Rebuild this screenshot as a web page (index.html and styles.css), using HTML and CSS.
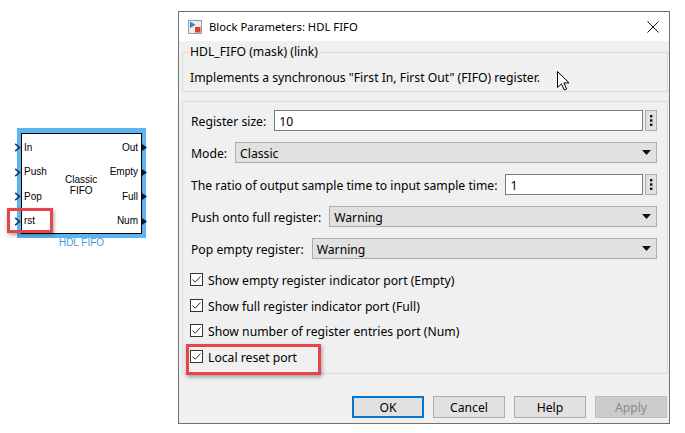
FILE: index.html
```html
<!DOCTYPE html>
<html>
<head>
<meta charset="utf-8">
<link rel="stylesheet" href="styles.css">
</head>
<body>
<div class="page">
  <div class="canvas">
    <div class="block">
      <div class="block-inner">
        <div class="ports ports-in">
          <div class="port"><svg class="chev" width="7" height="9" viewBox="0 0 7 9"><path d="M1.2 0.8 L5.5 4.5 L1.2 8.2" fill="none" stroke="#1d3557" stroke-width="1.6"/></svg>In</div>
          <div class="port"><svg class="chev" width="7" height="9" viewBox="0 0 7 9"><path d="M1.2 0.8 L5.5 4.5 L1.2 8.2" fill="none" stroke="#1d3557" stroke-width="1.6"/></svg>Push</div>
          <div class="port"><svg class="chev" width="7" height="9" viewBox="0 0 7 9"><path d="M1.2 0.8 L5.5 4.5 L1.2 8.2" fill="none" stroke="#1d3557" stroke-width="1.6"/></svg>Pop</div>
          <div class="port"><svg class="chev" width="7" height="9" viewBox="0 0 7 9"><path d="M1.2 0.8 L5.5 4.5 L1.2 8.2" fill="none" stroke="#1d3557" stroke-width="1.6"/></svg>rst</div>
        </div>
        <div class="block-title">Classic<br>FIFO</div>
        <div class="ports ports-out">
          <div class="port">Out<svg class="tri" width="5" height="7" viewBox="0 0 5 7"><path d="M0 0 L5 3.5 L0 7 Z" fill="#0d1b2a"/></svg></div>
          <div class="port">Empty<svg class="tri" width="5" height="7" viewBox="0 0 5 7"><path d="M0 0 L5 3.5 L0 7 Z" fill="#0d1b2a"/></svg></div>
          <div class="port">Full<svg class="tri" width="5" height="7" viewBox="0 0 5 7"><path d="M0 0 L5 3.5 L0 7 Z" fill="#0d1b2a"/></svg></div>
          <div class="port">Num<svg class="tri" width="5" height="7" viewBox="0 0 5 7"><path d="M0 0 L5 3.5 L0 7 Z" fill="#0d1b2a"/></svg></div>
        </div>
      </div>
    </div>
    <div class="block-name">HDL FIFO</div>
    <div class="hl hl-rst"></div>
  </div>

  <div class="dialog">
    <div class="titlebar">
      <svg class="app-icon" width="14" height="14" viewBox="0 0 14 14">
        <rect x="0.5" y="0.5" width="13" height="13" fill="#ececec" stroke="#9a9a9a"/>
        <path d="M2 1.5 L2 8 L7.5 4.7 Z" fill="#2f7fd1"/>
        <rect x="7" y="7" width="5.5" height="5.5" fill="#d8431c"/>
      </svg>
      <span class="title">Block Parameters: HDL FIFO</span>
      <svg class="close" width="12" height="12" viewBox="0 0 12 12"><path d="M0.5 0.5 L11.5 11.5 M11.5 0.5 L0.5 11.5" stroke="#111" stroke-width="1"/></svg>
    </div>
    <div class="content">
      <fieldset class="group group-desc">
        <legend>HDL_FIFO (mask) (link)</legend>
        <p class="desc">Implements a synchronous "First In, First Out" (FIFO) register.</p>
      </fieldset>
      <div class="group group-params">
        <div class="row">
          <span class="label">Register size:</span>
          <span class="edit">10</span>
          <span class="more"><svg width="3" height="11" viewBox="0 0 3 11"><rect x="0" y="0" width="2.4" height="2.4" fill="#111"/><rect x="0" y="4.3" width="2.4" height="2.4" fill="#111"/><rect x="0" y="8.6" width="2.4" height="2.4" fill="#111"/></svg></span>
        </div>
        <div class="row">
          <span class="label">Mode:</span>
          <span class="combo"><span class="val">Classic</span><svg class="arrow" width="9" height="5" viewBox="0 0 9 5"><path d="M0 0 L9 0 L4.5 5 Z" fill="#111"/></svg></span>
        </div>
        <div class="row">
          <span class="label">The ratio of output sample time to input sample time:</span>
          <span class="edit">1</span>
          <span class="more"><svg width="3" height="11" viewBox="0 0 3 11"><rect x="0" y="0" width="2.4" height="2.4" fill="#111"/><rect x="0" y="4.3" width="2.4" height="2.4" fill="#111"/><rect x="0" y="8.6" width="2.4" height="2.4" fill="#111"/></svg></span>
        </div>
        <div class="row">
          <span class="label">Push onto full register:</span>
          <span class="combo"><span class="val">Warning</span><svg class="arrow" width="9" height="5" viewBox="0 0 9 5"><path d="M0 0 L9 0 L4.5 5 Z" fill="#111"/></svg></span>
        </div>
        <div class="row">
          <span class="label">Pop empty register:</span>
          <span class="combo"><span class="val">Warning</span><svg class="arrow" width="9" height="5" viewBox="0 0 9 5"><path d="M0 0 L9 0 L4.5 5 Z" fill="#111"/></svg></span>
        </div>
        <div class="check-row">
          <span class="box"><svg width="11" height="11" viewBox="0 0 11 11"><path d="M1.5 5.5 L4.2 8.2 L9.5 2.5" fill="none" stroke="#333" stroke-width="1"/></svg></span>
          <span class="ctext">Show empty register indicator port (Empty)</span>
        </div>
        <div class="check-row">
          <span class="box"><svg width="11" height="11" viewBox="0 0 11 11"><path d="M1.5 5.5 L4.2 8.2 L9.5 2.5" fill="none" stroke="#333" stroke-width="1"/></svg></span>
          <span class="ctext">Show full register indicator port (Full)</span>
        </div>
        <div class="check-row">
          <span class="box"><svg width="11" height="11" viewBox="0 0 11 11"><path d="M1.5 5.5 L4.2 8.2 L9.5 2.5" fill="none" stroke="#333" stroke-width="1"/></svg></span>
          <span class="ctext">Show number of register entries port (Num)</span>
        </div>
        <div class="check-row check-hl">
          <span class="box"><svg width="11" height="11" viewBox="0 0 11 11"><path d="M1.5 5.5 L4.2 8.2 L9.5 2.5" fill="none" stroke="#333" stroke-width="1"/></svg></span>
          <span class="ctext">Local reset port</span>
          <div class="hl hl-local"></div>
        </div>
      </div>
      <div class="buttons">
        <span class="btn btn-default">OK</span>
        <span class="btn">Cancel</span>
        <span class="btn">Help</span>
        <span class="btn btn-disabled">Apply</span>
      </div>
    </div>
    <svg class="cursor" width="13" height="20" viewBox="0 0 13 20"><path d="M0.5 0.5 L0.5 16.5 L4.5 12.8 L7.3 19 L9.6 18 L6.9 11.9 L12 11.9 Z" fill="#fff" stroke="#000" stroke-width="1" stroke-linejoin="miter"/></svg>
  </div>
</div>
</body>
</html>
```

FILE: styles.css
```css
* { box-sizing: border-box; }
html, body { margin: 0; padding: 0; }
body {
  width: 685px;
  height: 433px;
  background: #ffffff;
  overflow: hidden;
  font-family: "Noto Sans", "Open Sans", sans-serif;
  font-size: 12.2px;
  color: #000;
}
.page {
  display: flex;
  align-items: flex-start;
  padding-top: 11px;
}

/* ---------- Simulink block ---------- */
.canvas {
  position: relative;
  width: 178px;
  height: 135px;
  margin-top: 117px;
  flex: none;
}
.block {
  margin-left: 17px;
  width: 129px;
  border: 4px solid #5cb4f0;
  border-top-width: 5px;
}
.block-inner {
  border: 1px solid #000;
  background: #fff;
  height: 101px;
  display: flex;
  justify-content: space-between;
  padding-top: 1px;
  font-family: "Liberation Sans", Arial, sans-serif;
  font-size: 10px;
}
.ports { display: flex; flex-direction: column; }
.port {
  position: relative;
  height: 25px;
  display: flex;
  align-items: center;
}
.ports-in .port { padding-left: 2px; }
.ports-out { align-items: flex-end; }
.ports-out .port { padding-right: 3px; }
.chev { position: absolute; left: -8px; top: 8px; }
.tri { position: absolute; right: -6px; top: 9px; }
.block-title {
  align-self: flex-start;
  margin-top: 39px;
  text-align: center;
  line-height: 11px;
  font-size: 10px;
  margin-left: 6px;
}
.block-name {
  margin-left: 17px;
  width: 129px;
  text-align: center;
  color: #3d9de3;
  font-family: "Liberation Sans", Arial, sans-serif;
  font-size: 10px;
  line-height: 11px;
  margin-top: -1px;
}
.hl {
  position: absolute;
  border: 3px solid #e8454b;
  box-shadow: 1px 2px 4px rgba(0,0,0,0.35);
  pointer-events: none;
}
.hl-rst { left: 7px; top: 80px; width: 46px; height: 25px; }

/* ---------- Dialog ---------- */
.dialog {
  position: relative;
  width: 492px;
  height: 413px;
  border: 1px solid #727272;
  background: #f0f0f0;
  flex: none;
}
.titlebar {
  height: 29px;
  background: #fff;
  display: flex;
  align-items: center;
  padding-left: 9px;
  padding-right: 10px;
}
.app-icon { flex: none; }
.title { margin-left: 7px; flex: 1; font-size: 11.3px; }
.close { flex: none; }

.content { padding: 0 1px 0 3px; }
.group {
  border: 1px solid #dcdcdc;
  margin: 0;
}
.group-desc {
  margin-top: 3px;
  padding: 10px 7px 5px 7px;
  min-width: 0;
}
.group-desc legend {
  padding: 0 1px;
  margin-left: -1px;
  line-height: 16px;
}
.desc { margin: 0; line-height: 16px; }

.group-params {
  margin-top: 9px;
  height: 273px;
  padding: 8px 10px 0 8px;
}
.row {
  display: flex;
  align-items: center;
  height: 21px;
  margin-bottom: 11px;
}
.label { margin-right: 8px; white-space: nowrap; padding-top: 2px; }
.edit {
  flex: 1;
  height: 21px;
  background: #fff;
  border: 1px solid #7a7a7a;
  padding-left: 4px;
  padding-top: 1px;
  line-height: 19px;
}
.more {
  flex: none;
  width: 12px;
  height: 21px;
  margin-left: 2px;
  background: #e1e1e1;
  border: 1px solid #adadad;
  display: flex;
  align-items: center;
  justify-content: center;
}
.combo {
  flex: 1;
  height: 21px;
  background: #e1e1e1;
  border: 1px solid #adadad;
  padding-left: 4px;
  padding-right: 5px;
  display: flex;
  align-items: center;
  justify-content: space-between;
}
.val { padding-top: 2px; }
.check-row {
  position: relative;
  display: flex;
  align-items: center;
  height: 25.5px;
}
.row + .check-row { margin-top: -3px; }
.ctext { padding-top: 2px; }
.box {
  width: 13px;
  height: 13px;
  margin-left: -1px;
  margin-right: 5px;
  border: 1px solid #333;
  background: #fff;
  display: flex;
  align-items: center;
  justify-content: center;
}
.hl-local { left: -5px; top: 0; width: 135px; height: 31px; }

.buttons {
  display: flex;
  justify-content: flex-end;
  gap: 9px;
  margin-top: 22px;
  padding-right: 1px;
}
.btn {
  width: 72px;
  height: 22px;
  background: #e1e1e1;
  border: 1px solid #adadad;
  display: flex;
  align-items: center;
  justify-content: center;
  font-size: 12.2px;
  padding-top: 1px;
}
.btn-default { border: 2px solid #0078d7; }
.btn-disabled { background: #cccccc; border-color: #bfbfbf; color: #8a8a8a; }

.cursor { position: absolute; left: 378px; top: 59px; }
```
